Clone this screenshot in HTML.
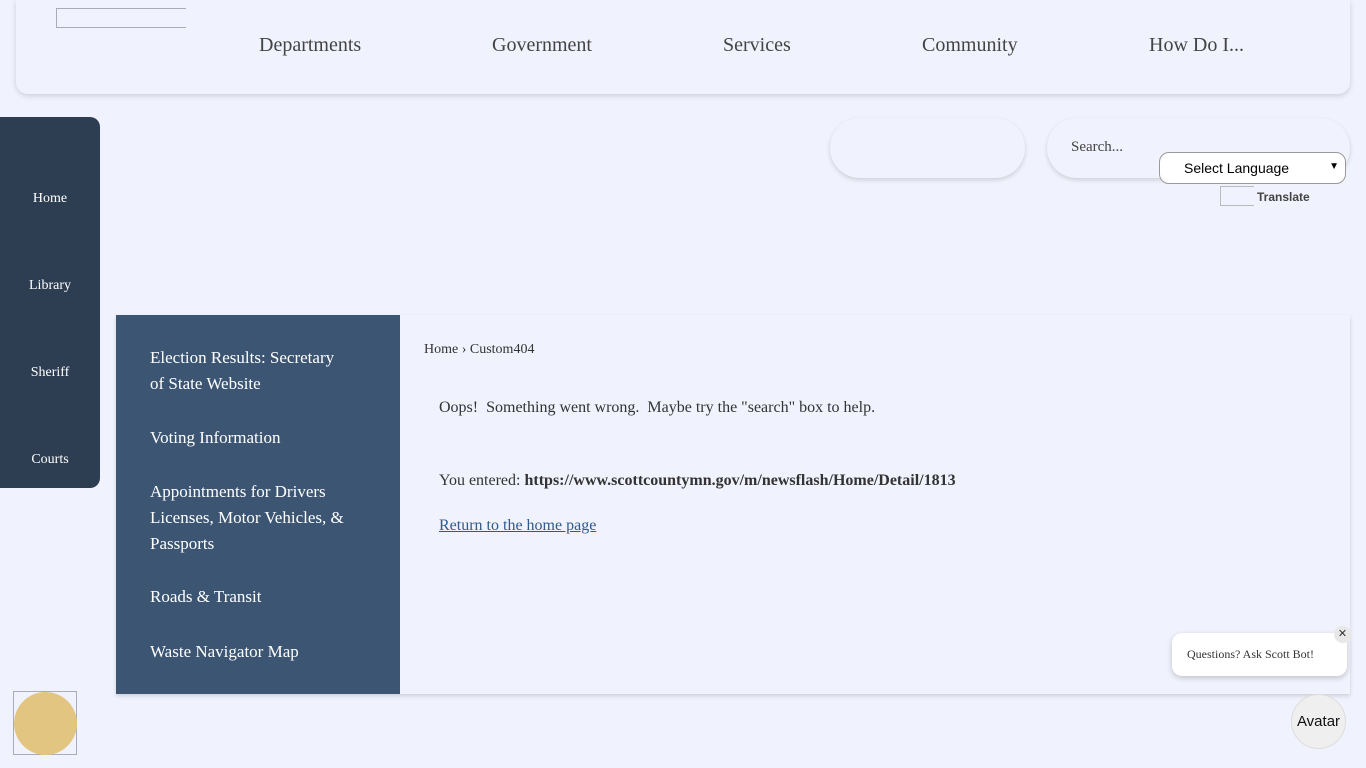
<!DOCTYPE html>
<html><head><meta charset="utf-8"><style>
*{box-sizing:border-box;margin:0;padding:0}
body{width:1366px;height:768px;background:#f0f2fd;font-family:"Liberation Serif",serif;position:relative;overflow:hidden;color:#333}
.hdr{position:absolute;left:16px;top:0;width:1334px;height:94px;background:#f0f2fd;border-radius:0 0 12px 12px;box-shadow:0 2px 6px rgba(0,0,0,.15)}
.logo{position:absolute;left:56px;top:8px;width:130px;height:20px;border-top:1px solid #aab;border-left:1px solid #aab;border-bottom:1px solid #aab}
.nav{position:absolute;top:34px;font-size:20px;color:#444}
.side{position:absolute;left:0;top:117px;width:100px;height:371px;background:#2e3e52;border-radius:0 10px 10px 0}
.side div{position:absolute;width:100px;text-align:center;color:#fff;font-size:14px}
.pill{position:absolute;top:118px;height:60px;border-radius:30px;background:#f0f2fd;box-shadow:0 2px 5px rgba(0,0,0,.15)}
.sel{position:absolute;left:1159px;top:152px;width:187px;height:32px;border:1px solid #999;border-radius:10px;background:#fff;font-family:"Liberation Sans",sans-serif;font-size:14px;color:#000;padding:7px 0 0 24px}
.main{position:absolute;left:116px;top:315px;width:1234px;height:379px;background:#f0f2fd;box-shadow:0 2px 4px rgba(0,0,0,.15)}
.left{position:absolute;left:0;top:0;width:284px;height:379px;background:#3b5573}
.left div{position:absolute;left:34px;color:#fff;font-size:17px;line-height:26px;width:200px}
.c{position:absolute;font-size:16px;color:#333}
</style></head><body>
<div class="hdr"></div>
<div class="logo"></div>
<div class="nav" style="left:259px">Departments</div>
<div class="nav" style="left:492px">Government</div>
<div class="nav" style="left:723px">Services</div>
<div class="nav" style="left:922px">Community</div>
<div class="nav" style="left:1149px">How Do I...</div>
<div class="side">
<div style="top:74px">Home</div><div style="top:161px">Library</div><div style="top:248px">Sheriff</div><div style="top:335px">Courts</div>
</div>
<div class="pill" style="left:830px;width:195px"></div>
<div class="pill" style="left:1047px;width:303px"><span style="position:absolute;left:24px;top:21px;font-size:15px;color:#444">Search...</span></div>
<div class="sel">Select Language<span style="position:absolute;right:6px;top:8px;font-size:10px">&#9660;</span></div>
<div style="position:absolute;left:1220px;top:186px;width:34px;height:20px;border:1px solid #bbb;border-right:none"></div>
<div style="position:absolute;left:1257px;top:190px;font-family:'Liberation Sans',sans-serif;font-size:12px;font-weight:bold;color:#444">Translate</div>
<div class="main">
<div class="left">
<div style="top:30px">Election Results: Secretary of State Website</div>
<div style="top:110px">Voting Information</div>
<div style="top:164px">Appointments for Drivers Licenses, Motor Vehicles, &amp; Passports</div>
<div style="top:269px">Roads &amp; Transit</div>
<div style="top:324px">Waste Navigator Map</div>
</div>
</div>
<div class="c" style="left:424px;top:342px;font-size:14px">Home › Custom404</div>
<div class="c" style="left:439px;top:399px">Oops!&nbsp; Something went wrong.&nbsp; Maybe try the "search" box to help.</div>
<div class="c" style="left:439px;top:472px">You entered: <b>https://www.scottcountymn.gov/m/newsflash/Home/Detail/1813</b></div>
<div class="c" style="left:439px;top:517px;color:#2f5a8a;text-decoration:underline">Return to the home page</div>
<div style="position:absolute;left:13px;top:691px;width:64px;height:64px;border:1px solid #aab"><div style="width:63px;height:63px;border-radius:50%;background:#e2c580"></div></div>
<div style="position:absolute;left:1172px;top:633px;width:175px;height:43px;background:#fff;border-radius:10px;box-shadow:0 2px 6px rgba(0,0,0,.2);font-size:12px;padding:14px 0 0 15px">Questions? Ask Scott Bot!</div>
<div style="position:absolute;left:1334px;top:626px;width:17px;height:17px;border-radius:50%;background:#e8e8e8;font-size:11px;text-align:center;line-height:17px;font-family:'Liberation Sans',sans-serif">✕</div>
<div style="position:absolute;left:1291px;top:694px;width:55px;height:55px;border-radius:50%;background:#efefef;border:1px solid #ddd;font-family:'Liberation Sans',sans-serif;font-size:15px;color:#111;text-align:center;line-height:53px">Avatar</div>
</body></html>
